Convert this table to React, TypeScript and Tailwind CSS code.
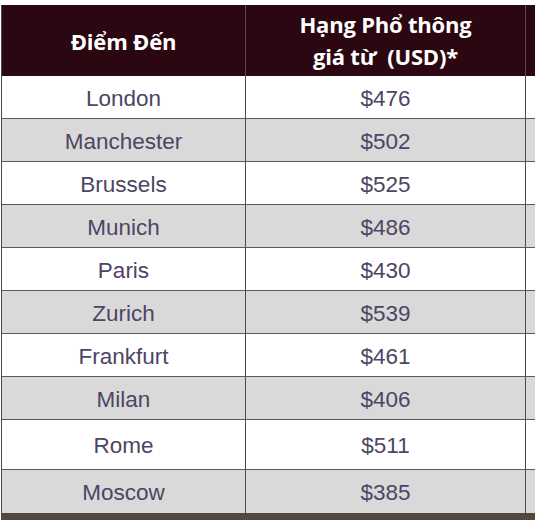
import React from "react";

const rows: { city: string; price: string; h: string }[] = [
  { city: "London", price: "$476", h: "h-[43px]" },
  { city: "Manchester", price: "$502", h: "h-[43px]" },
  { city: "Brussels", price: "$525", h: "h-[43px]" },
  { city: "Munich", price: "$486", h: "h-[43px]" },
  { city: "Paris", price: "$430", h: "h-[43px]" },
  { city: "Zurich", price: "$539", h: "h-[43px]" },
  { city: "Frankfurt", price: "$461", h: "h-[43px]" },
  { city: "Milan", price: "$406", h: "h-[43px]" },
  { city: "Rome", price: "$511", h: "h-[50px]" },
  { city: "Moscow", price: "$385", h: "h-[43px]" },
];

export default function App() {
  return (
    <div className="w-[535px] h-[520px] overflow-hidden bg-white pt-[5px] pl-[1px]">
      <div className="w-[560px] border-l border-[#4a4a4a]">
        <div className="flex h-[71px] bg-[#2b0711] text-white font-bold text-[22px] leading-[32px] font-['Open_Sans',Lato,sans-serif] tracking-[-0.2px]">
          <div className="w-[243px] flex items-center justify-center">Điểm Đến</div>
          <div className="w-[280px] border-l border-[#5e4a54] flex flex-col items-center justify-center pb-[1px]">
            <span>Hạng Phổ thông</span>
            <span>giá từ&nbsp; (USD)*</span>
          </div>
          <div className="flex-1 border-l border-[#5e4a54]" />
        </div>
        {rows.map((r, i) => (
          <div
            key={r.city}
            className={`flex ${r.h} ${i % 2 === 1 ? "bg-[#d9d9d9]" : "bg-white"} ${i < rows.length - 1 ? "border-b border-[#5a5a5a]" : ""} text-[#4d4564] text-[22.5px] font-['Liberation_Sans',Arial,sans-serif]`}
          >
            <div className="w-[243px] flex items-center justify-center pt-[3px]">{r.city}</div>
            <div className="w-[280px] border-l border-[#4a4a4a] flex items-center justify-center pt-[3px]">{r.price}</div>
            <div className="flex-1 border-l border-[#4a4a4a]" />
          </div>
        ))}
        <div className="h-[8px] bg-[#52483e]" />
      </div>
    </div>
  );
}
